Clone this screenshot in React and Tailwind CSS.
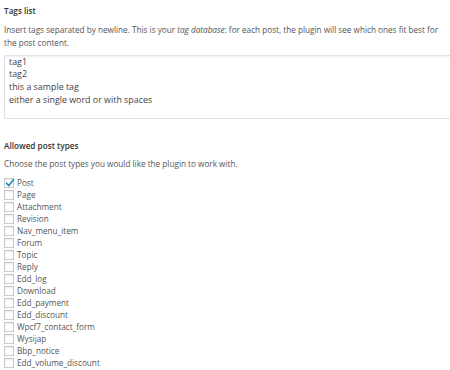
import React from "react";

const types = [
  "Post","Page","Attachment","Revision","Nav_menu_item","Forum","Topic","Reply","Edd_log","Download","Edd_payment","Edd_discount","Wpcf7_contact_form","Wysijap","Bbp_notice","Edd_volume_discount",
];

export default function App() {
  return (
    <div className="w-[450px] h-[370px] overflow-hidden bg-white text-[#555] text-[8.2px] leading-[13px] font-['Open_Sans',sans-serif] pl-1 pt-[4px]">
      <div className="font-semibold text-[#333] leading-[14px]">Tags list</div>
      <p className="mt-[4.5px] leading-[13px] pr-1">
        Insert tags separated by newline. This is your <em>tag database</em>: for each post, the plugin will see which ones fit best for the post content.
      </p>
      <div className="mt-[6px] w-[460px] h-[64px] border border-[#e3e3e3] shadow-[inset_0_1px_2px_rgba(0,0,0,0.07)] px-[4px] pt-0 text-[#444] text-[8.9px] leading-[12.7px]">
        <div>tag1</div>
        <div>tag2</div>
        <div>this a sample tag</div>
        <div>either a single word or with spaces</div>
      </div>
      <div className="mt-[20px] font-semibold text-[#333] leading-[14px]">Allowed post types</div>
      <p className="mt-[4.5px] leading-[13px]">Choose the post types you would like the plugin to work with.</p>
      <div className="mt-[6.5px] flex flex-col">
        {types.map((t, i) => (
          <div key={t} className="flex items-center h-[12px] gap-[3px]">
            <span className="relative w-[10px] h-[10px] border border-[#c8c8c8] bg-white shadow-[inset_0_1px_2px_rgba(0,0,0,0.08)] shrink-0">
              {i === 0 && (
                <svg viewBox="0 0 10 10" className="absolute left-[0px] top-[-1px] w-[10px] h-[10px]">
                  <path d="M1.5 5.2 L3.8 7.6 L8.6 1.6" fill="none" stroke="#1e8cbe" strokeWidth="1.6" strokeLinecap="round" strokeLinejoin="round" />
                </svg>
              )}
            </span>
            <span className="leading-[12px]">{t}</span>
          </div>
        ))}
      </div>
    </div>
  );
}
